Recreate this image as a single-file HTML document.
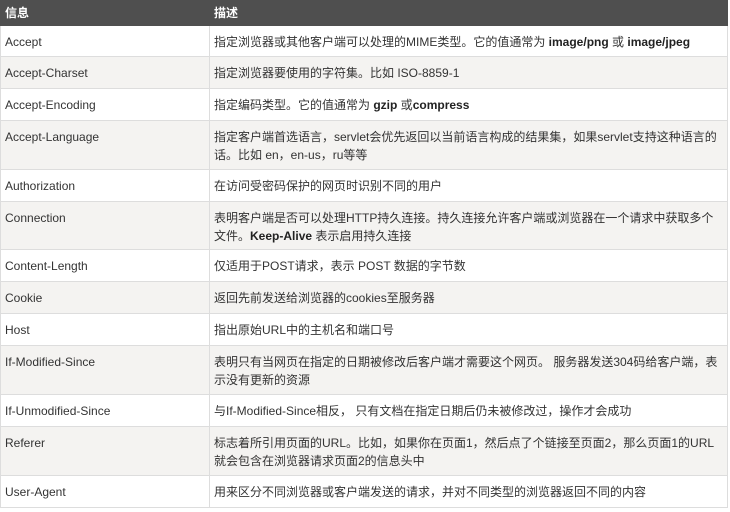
<!DOCTYPE html><html><head><meta charset="utf-8"><style>
body{margin:0;width:730px;height:512px;background:#fff;font-family:"Liberation Sans","Noto Sans CJK SC",sans-serif;font-size:12px;color:#333;overflow:hidden}
.t{position:absolute;left:0;top:0;width:728px}
.r{display:flex;border-bottom:1px solid #ddd;border-right:1px solid #ddd;border-left:1px solid #ddd;box-sizing:border-box;height:32px;overflow:hidden}
.d{height:49px}
.r div{padding:7px 4px 0;line-height:18px;box-sizing:border-box}
.r div:first-child{width:209px;border-right:1px solid #ddd}
.r div:last-child{flex:1}
.h{background:#4f4f4f;color:#fff;font-weight:bold;border:none;height:26px}
.h div{padding:4px 5px;border-right:none!important}
.g{background:#f4f3f1}
b{font-weight:bold;color:#222}
</style></head><body><div class="t">
<div class="r h"><div>信息</div><div>描述</div></div>
<div class="r" style="height:31px"><div>Accept</div><div>指定浏览器或其他客户端可以处理的MIME类型。它的值通常为 <b>image/png</b> 或 <b>image/jpeg</b></div></div>
<div class="r g"><div>Accept-Charset</div><div>指定浏览器要使用的字符集。比如 ISO-8859-1</div></div>
<div class="r"><div>Accept-Encoding</div><div>指定编码类型。它的值通常为 <b>gzip</b> 或<b>compress</b></div></div>
<div class="r g d"><div>Accept-Language</div><div>指定客户端首选语言，servlet会优先返回以当前语言构成的结果集，如果servlet支持这种语言的话。比如 en，en-us，ru等等</div></div>
<div class="r"><div>Authorization</div><div>在访问受密码保护的网页时识别不同的用户</div></div>
<div class="r g" style="height:48px"><div>Connection</div><div>表明客户端是否可以处理HTTP持久连接。持久连接允许客户端或浏览器在一个请求中获取多个文件。<b>Keep-Alive</b> 表示启用持久连接</div></div>
<div class="r"><div>Content-Length</div><div>仅适用于POST请求，表示 POST 数据的字节数</div></div>
<div class="r g"><div>Cookie</div><div>返回先前发送给浏览器的cookies至服务器</div></div>
<div class="r"><div>Host</div><div>指出原始URL中的主机名和端口号</div></div>
<div class="r g d"><div>If-Modified-Since</div><div>表明只有当网页在指定的日期被修改后客户端才需要这个网页。 服务器发送304码给客户端，表示没有更新的资源</div></div>
<div class="r"><div>If-Unmodified-Since</div><div>与If-Modified-Since相反， 只有文档在指定日期后仍未被修改过，操作才会成功</div></div>
<div class="r g d"><div>Referer</div><div>标志着所引用页面的URL。比如，如果你在页面1，然后点了个链接至页面2，那么页面1的URL就会包含在浏览器请求页面2的信息头中</div></div>
<div class="r"><div>User-Agent</div><div>用来区分不同浏览器或客户端发送的请求，并对不同类型的浏览器返回不同的内容</div></div>
</div></body></html>
